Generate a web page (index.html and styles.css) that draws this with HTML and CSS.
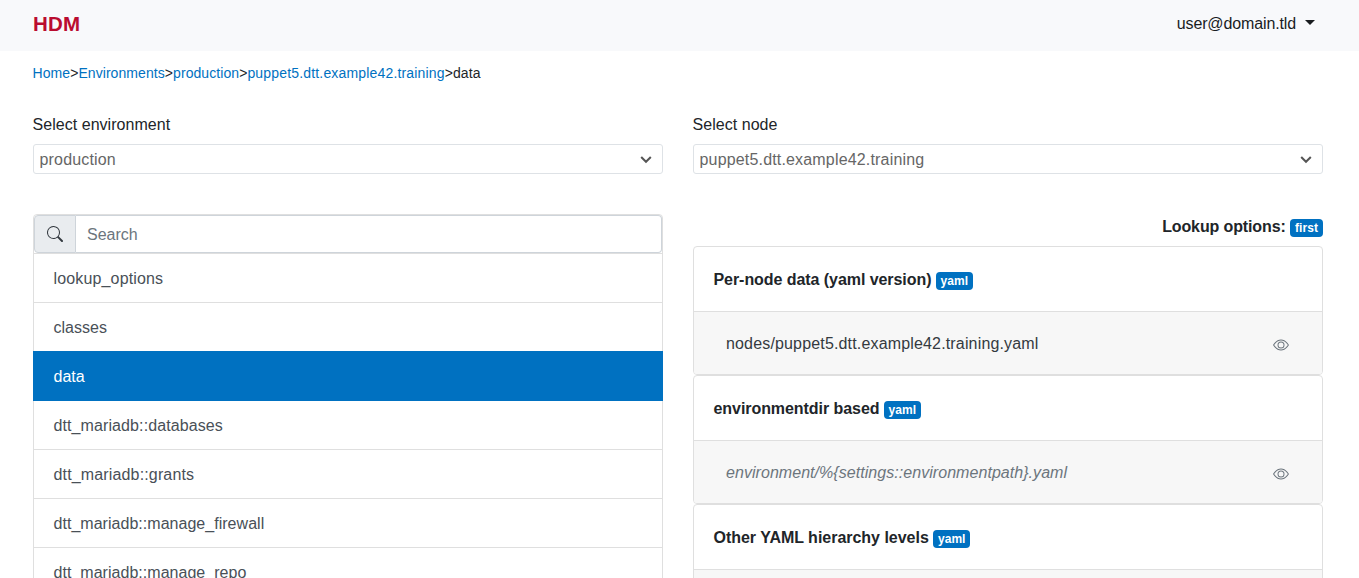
FILE: index.html
```html
<!DOCTYPE html>
<html lang="en">
<head>
<meta charset="utf-8">
<title>HDM</title>
<link rel="stylesheet" href="styles.css">
</head>
<body>
<header class="navbar">
  <a class="brand" href="#">HDM</a>
  <a class="user-menu" href="#"><span>user@domain.tld</span></a>
</header>
<main class="container">
  <nav class="breadcrumb"><a href="#">Home</a>&gt;<a href="#">Environments</a>&gt;<a href="#">production</a>&gt;<a class="node" href="#">puppet5.dtt.example42.training</a>&gt;<span>data</span></nav>
  <div class="columns selectors">
    <div>
      <div class="label">Select environment</div>
      <div class="select"><span>production</span><svg width="12" height="12" viewBox="0 0 12 12"><path d="M1.200 4 6 8.800 10.800 4"/></svg></div>
    </div>
    <div>
      <div class="label">Select node</div>
      <div class="select"><span>puppet5.dtt.example42.training</span><svg width="12" height="12" viewBox="0 0 12 12"><path d="M1.200 4 6 8.800 10.800 4"/></svg></div>
    </div>
  </div>
  <div class="columns">
    <section class="keys">
      <div class="search">
        <div class="search-icon"><svg width="16" height="16" viewBox="0 0 16 16" fill="currentColor"><path d="M11.742 10.344a6.500 6.500 0 1 0-1.397 1.398h-.001c.03.040.062.078.098.115l3.850 3.850a1 1 0 0 0 1.415-1.414l-3.850-3.850a1.007 1.007 0 0 0-.115-.1zM12 6.500a5.500 5.500 0 1 1-11 0 5.500 5.500 0 0 1 11 0z"/></svg></div>
        <input class="search-input" type="text" placeholder="Search">
      </div>
      <a class="key wide" href="#">lookup_options</a>
      <a class="key" href="#">classes</a>
      <a class="key active" href="#">data</a>
      <a class="key medium" href="#">dtt_mariadb::databases</a>
      <a class="key wide" href="#">dtt_mariadb::grants</a>
      <a class="key" href="#">dtt_mariadb::manage_firewall</a>
      <a class="key" href="#">dtt_mariadb::manage_repo</a>
    </section>
    <section>
      <div class="lookup"><span>Lookup options:</span> <span class="badge first">first</span></div>
      <article class="card">
        <h2 class="card-title"><span>Per-node data (yaml version)</span> <span class="badge">yaml</span></h2>
        <div class="file"><span>nodes/puppet5.dtt.example42.training.yaml</span>
          <svg class="eye" width="16" height="16" viewBox="0 0 16 16"><path d="M16 8s-3-5.500-8-5.500S0 8 0 8s3 5.500 8 5.500S16 8 16 8zM1.173 8a13.133 13.133 0 0 1 1.660-2.043C4.120 4.668 5.880 3.500 8 3.500c2.120 0 3.879 1.168 5.168 2.457A13.133 13.133 0 0 1 14.828 8c-.058.087-.122.183-.195.288-.335.480-.830 1.120-1.465 1.755C11.879 11.332 10.119 12.500 8 12.500c-2.120 0-3.879-1.168-5.168-2.457A13.134 13.134 0 0 1 1.172 8z"/><path d="M8 5.500a2.500 2.500 0 1 0 0 5 2.500 2.500 0 0 0 0-5zM4.500 8a3.500 3.500 0 1 1 7 0 3.500 3.500 0 0 1-7 0z"/></svg></div>
      </article>
      <article class="card">
        <h2 class="card-title"><span>environmentdir based</span> <span class="badge">yaml</span></h2>
        <div class="file missing"><span>environment/%{settings::environmentpath}.yaml</span>
          <svg class="eye" width="16" height="16" viewBox="0 0 16 16"><path d="M16 8s-3-5.500-8-5.500S0 8 0 8s3 5.500 8 5.500S16 8 16 8zM1.173 8a13.133 13.133 0 0 1 1.660-2.043C4.120 4.668 5.880 3.500 8 3.500c2.120 0 3.879 1.168 5.168 2.457A13.133 13.133 0 0 1 14.828 8c-.058.087-.122.183-.195.288-.335.480-.830 1.120-1.465 1.755C11.879 11.332 10.119 12.500 8 12.500c-2.120 0-3.879-1.168-5.168-2.457A13.134 13.134 0 0 1 1.172 8z"/><path d="M8 5.500a2.500 2.500 0 1 0 0 5 2.500 2.500 0 0 0 0-5zM4.500 8a3.500 3.500 0 1 1 7 0 3.500 3.500 0 0 1-7 0z"/></svg></div>
      </article>
      <article class="card">
        <h2 class="card-title loose"><span>Other YAML hierarchy levels</span> <span class="badge">yaml</span></h2>
        <div class="file"></div>
      </article>
    </section>
  </div>
</main>
</body>
</html>
```
FILE: styles.css
```css
* { box-sizing: border-box; }
body {
  margin: 0;
  height: 578px;
  overflow: hidden;
  background: #fff;
  color: #212529;
  font: 16px/24px "Liberation Sans", Arial, sans-serif;
}
a { color: #0071c1; text-decoration: none; }
.navbar {
  display: flex;
  align-items: center;
  justify-content: space-between;
  height: 51px;
  padding: 0 44px 4px 33px;
  background: #f8f9fb;
}
.brand { color: #ba0c2f; font-size: 20.500px; font-weight: 700; letter-spacing: .2px; }
.user-menu { display: flex; align-items: center; gap: 9px; color: #191c1f; letter-spacing: -.13px; }
.user-menu::after {
  content: "";
  margin-top: -2px;
  border: 5px solid transparent;
  border-top-color: currentColor;
  border-bottom: 0;
}
.container { padding: 11px 36px 0 32px; }
.breadcrumb { height: 22px; padding-left: .5px; font-size: 14px; line-height: 22px; letter-spacing: .07px; white-space: nowrap; }
.breadcrumb .node { letter-spacing: .17px; }
.columns { display: grid; grid-template-columns: 630px 630px; gap: 30px; padding-left: 1px; }
.selectors { margin: 28px 0 40px; }
.label { height: 32px; padding-top: 1px; margin-left: -.5px; letter-spacing: .04px; }
.select {
  display: flex;
  align-items: center;
  justify-content: space-between;
  height: 30px;
  padding: 0 10px 0 5.500px;
  border: 1px solid #dee2e6;
  border-radius: 3px;
  color: #666;
  letter-spacing: .17px;
}
.select span { height: 22px; line-height: 23px; overflow: hidden; }
.select path { fill: none; stroke: #555; stroke-width: 2; }
.keys { border: 1px solid #dfdfdf; border-radius: 4px 4px 0 0; }
.search { display: flex; height: 38px; }
.search-icon {
  display: flex;
  align-items: center;
  justify-content: center;
  width: 42px;
  border: 1px solid #ced4da;
  border-radius: 4px 0 0 4px;
  background: #e9ecef;
  color: #343a40;
}
.search-input {
  flex: 1;
  padding: 2px 11px 0;
  border: 1px solid #ced4da;
  border-left: 0;
  border-radius: 0 4px 4px 0;
  background: #fff;
  font: inherit;
}
.search-input::placeholder { color: #6c757d; opacity: 1; }
.key { display: block; height: 49px; padding: 13px 19.500px 0; border-top: 1px solid #dfdfdf; color: #495057; letter-spacing: .03px; }
.key.medium { letter-spacing: .1px; }
.key.wide { letter-spacing: .15px; }
.key.active { height: 50px; margin: 0 -1px -1px; padding: 14px 20.500px 0; border: 0; background: #0071c1; color: #fff; position: relative; }
.lookup { height: 32px; padding-top: 1px; font-weight: 700; text-align: right; letter-spacing: -.12px; }
.badge {
  display: inline-block;
  width: 37px;
  height: 18px;
  margin-top: 4px;
  border-radius: 4px;
  background: #0071c1;
  color: #fff;
  font-size: 12px;
  font-weight: 700;
  line-height: 18px;
  letter-spacing: .05px;
  text-align: center;
  vertical-align: top;
}
.badge.first { width: 33px; }
.card { height: 129px; border: 1px solid #dfdfdf; border-radius: 4px; overflow: hidden; }
.card-title { height: 64px; margin: 0; padding: 21px 19.500px 0; font-size: 16px; font-weight: 700; line-height: 24px; letter-spacing: -.06px; }
.card-title.loose { letter-spacing: -.02px; }
.file {
  display: flex;
  align-items: center;
  justify-content: space-between;
  height: 63px;
  padding: 0 33px 0 32px;
  border-top: 1px solid #dfdfdf;
  background: #f7f7f7;
  color: #343a40;
  letter-spacing: .16px;
}
.file span { padding-top: 2px; }
.missing { color: #6c757d; font-style: italic; letter-spacing: .05px; }
.eye { margin-top: 4px; fill: #6c757d; }
```
